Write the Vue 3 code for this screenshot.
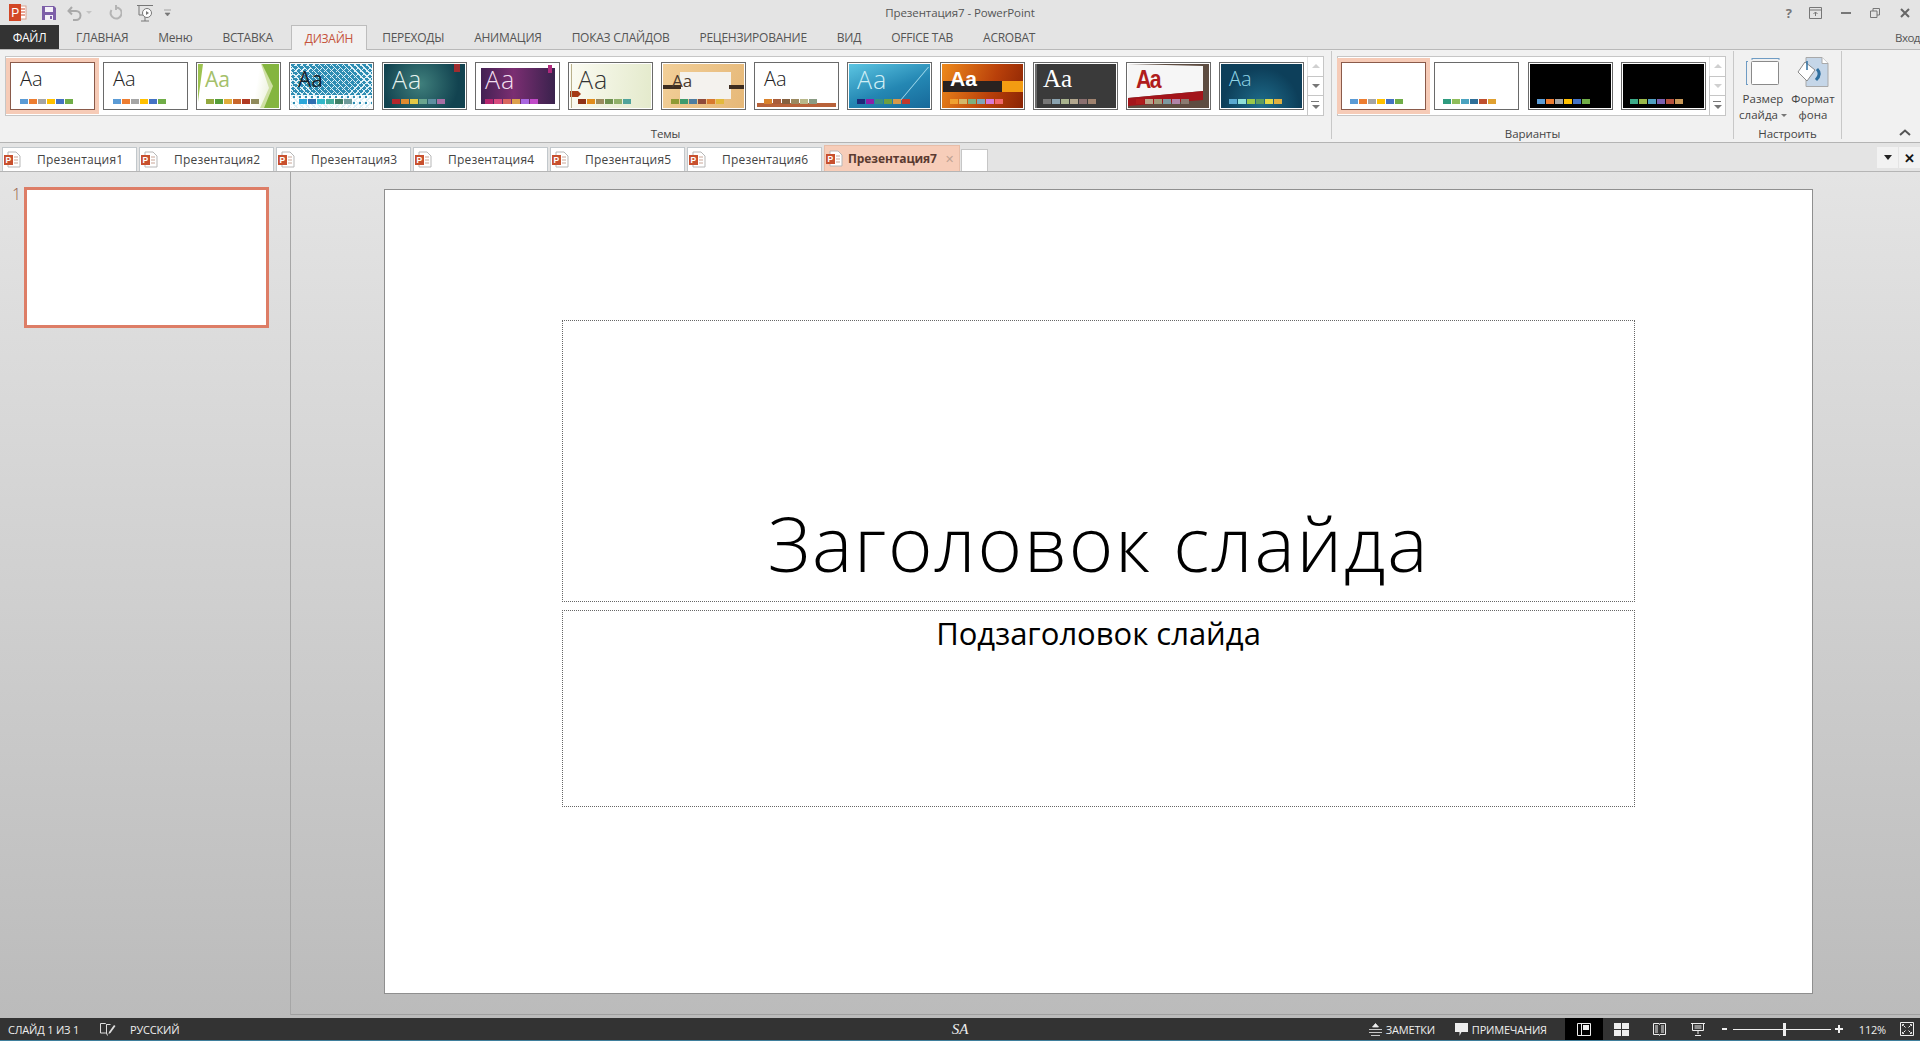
<template>
  <div class="app">
    <!-- заголовок окна -->
    <div class="titlebar">
      <div class="qat">
        <svg class="ic" width="18" height="17" viewBox="0 0 18 17" style="margin-left:9px">
          <rect x="6" y="2" width="11" height="13" fill="#fff" stroke="#d9a08c" />
          <path d="M11 5h5M11 8h5M11 11h5" stroke="#d24726" />
          <rect x="0" y="0" width="12" height="17" fill="#d24726" />
          <text x="2.2" y="13" font-size="12" fill="#fff" font-family="Liberation Sans">P</text>
        </svg>
        <svg class="ic" width="16" height="16" viewBox="0 0 16 16" style="margin-left:14px">
          <path d="M1 1h12l2 2v12H1z" fill="#7d5fa8" />
          <rect x="4" y="2" width="8" height="5" fill="#f4f1f8" />
          <rect x="4" y="10" width="8" height="5" fill="#f4f1f8" />
          <rect x="9" y="11" width="2" height="3" fill="#7d5fa8" />
        </svg>
        <svg class="ic" width="16" height="16" viewBox="0 0 16 16" style="margin-left:10px">
          <path d="M5 2 1.500 6 5 9.500M2 6h7a4.500 4.500 0 0 1 0 9H6" fill="none" stroke="#a9a9a9" stroke-width="2" />
        </svg>
        <span class="mini-arrow"></span>
        <svg class="ic" width="14" height="16" viewBox="0 0 14 16" style="margin-left:16px">
          <path d="M8 2.500A5.500 5.500 0 1 1 3.500 5M8 0v5" fill="none" stroke="#b4b4b4" stroke-width="2" />
        </svg>
        <svg class="ic" width="18" height="18" viewBox="0 0 18 18" style="margin-left:14px">
          <path d="M1 1.500h16M3 2v9h5M9 13v4M5 17h8" fill="none" stroke="#777" />
          <circle cx="11" cy="9" r="4.500" fill="#fff" stroke="#777" />
          <path d="M10 7v4l3-2z" fill="#777" />
        </svg>
        <svg class="ic" width="7" height="8" viewBox="0 0 7 8" style="margin-left:10px">
          <path d="M0 1h7M1 4h5l-2.500 3z" fill="#777" stroke="#777" stroke-width=".6" />
        </svg>
      </div>
      <div class="doc-title">Презентация7 - PowerPoint</div>
      <div class="winctl">
        <span class="help">?</span>
        <svg width="13" height="12" viewBox="0 0 13 12"><path d="M.5.500h12v11H.5zM.5 3h12M6.500 9V5M4.500 7l2-2 2 2" fill="none" stroke="#777" /></svg>
        <svg width="10" height="3" viewBox="0 0 10 3" style="margin-left:19px"><rect width="10" height="2" y="1" fill="#777" /></svg>
        <svg width="10" height="10" viewBox="0 0 10 10" style="margin-left:19px"><path d="M.5 3h6.500v6.500H.5zM3 3V.5h6.500V7H7" fill="none" stroke="#777" /></svg>
        <svg width="10" height="10" viewBox="0 0 10 10" style="margin-left:20px"><path d="M1 1l8 8M9 1 1 9" stroke="#666" stroke-width="2" /></svg>
      </div>
    </div>

    <!-- вкладки ленты -->
    <div class="tabs">
      <div class="tab-file">ФАЙЛ</div>
      <div v-for="t in ribbonTabs" :key="t" class="tab" :class="{ active: t === 'ДИЗАЙН' }">{{ t }}</div>
      <div class="login">Вход</div>
    </div>

    <!-- лента -->
    <div class="ribbon">
      <div class="group group-themes">
        <div class="gallery">
          <div class="thumbs">
            <div
              v-for="(th, i) in themes"
              :key="i"
              class="thumb"
              :class="{ selected: i === 0 }"
            >
              <div class="thumb-in" :style="{ background: th.bg }">
                <svg v-if="th.shapes" class="deco" viewBox="0 0 81 44" width="81" height="44">
                  <polygon v-for="(s, k) in th.shapes" :key="k" :points="s[0]" :fill="s[1]" />
                </svg>
                <span class="aa" :class="th.font" :style="{ color: th.color }">Aa</span>
                <div class="swatches">
                  <i v-for="c in th.sw" :key="c" :style="{ background: c }"></i>
                </div>
              </div>
            </div>
          </div>
          <div class="scroller">
            <span class="sc up"></span>
            <span class="sc down"></span>
            <span class="sc more"></span>
          </div>
        </div>
        <div class="group-label">Темы</div>
      </div>

      <div class="group group-variants">
        <div class="gallery">
          <div class="thumbs">
            <div
              v-for="(th, i) in variants"
              :key="i"
              class="thumb"
              :class="{ selected: i === 0 }"
            >
              <div class="thumb-in" :style="{ background: th.bg }">
                <div class="swatches low">
                  <i v-for="c in th.sw" :key="c" :style="{ background: c }"></i>
                </div>
              </div>
            </div>
          </div>
          <div class="scroller">
            <span class="sc up"></span>
            <span class="sc down faded"></span>
            <span class="sc more"></span>
          </div>
        </div>
        <div class="group-label">Варианты</div>
      </div>

      <div class="group group-setup">
        <div class="big-btns">
          <div class="big-btn">
            <svg width="34" height="28" viewBox="0 0 34 28">
              <rect x="5.500" y="3.500" width="27" height="23" rx="1" fill="#fff" stroke="#8a8a8a" />
              <path d="M6 .5h27M6 0v2M33 0v2M.5 4v22M0 3.500h2M0 26.500h2" fill="none" stroke="#6f9cc4" />
            </svg>
            <div class="big-txt">Размер<br />слайда<span class="caret"></span></div>
          </div>
          <div class="big-btn">
            <svg width="32" height="30" viewBox="0 0 32 30">
              <path d="M9 .5h16l6 6v23H9z" fill="#c5d6e8" stroke="#a9a9a9" />
              <path d="M25 .5v6h6" fill="#fff" stroke="#a9a9a9" />
              <path d="M8 5 1 15l9 9 8-11z" fill="#fff" stroke="#8a8a8a" />
              <path d="M10 4v9" stroke="#2f6f9f" stroke-width="1.500" />
              <path d="M20 12c3 3 3 7-1 11" fill="none" stroke="#2f6f9f" stroke-width="3" />
            </svg>
            <div class="big-txt">Формат<br />фона</div>
          </div>
        </div>
        <div class="group-label">Настроить</div>
      </div>

      <svg class="collapse" width="12" height="7" viewBox="0 0 12 7">
        <path d="M1 6l5-4.500L11 6" fill="none" stroke="#555" stroke-width="2" />
      </svg>
    </div>

    <!-- вкладки Office Tab -->
    <div class="docbar">
      <div
        v-for="(d, i) in docs"
        :key="d"
        class="doc"
        :class="{ current: i === docs.length - 1 }"
      >
        <svg width="17" height="17" viewBox="0 0 17 17">
          <path d="M4 1h8l4 4v11H4z" fill="#fff" stroke="#b7b7b7" />
          <path d="M10 6h4M10 9h4M10 12h4" stroke="#c9a596" />
          <rect x="0" y="4" width="9" height="10" fill="#c8502e" />
          <text x="1.500" y="12" font-size="8.500" font-weight="700" fill="#fff" font-family="Liberation Sans">P</text>
        </svg>
        <span class="doc-name">{{ d }}</span>
        <span v-if="i === docs.length - 1" class="doc-x">✕</span>
      </div>
      <div class="doc-new"></div>
      <div class="bar-btns">
        <span class="bar-btn"><i class="tri"></i></span>
        <span class="bar-btn x">✕</span>
      </div>
    </div>

    <!-- рабочая область -->
    <div class="work">
      <div class="side">
        <span class="num">1</span>
        <div class="side-slide"></div>
      </div>
      <div class="editor">
        <div class="slide">
          <div class="ph ph-title"><span>Заголовок слайда</span></div>
          <div class="ph ph-sub"><span>Подзаголовок слайда</span></div>
        </div>
      </div>
    </div>

    <!-- строка состояния -->
    <div class="status">
      <div class="st-left">
        <span>СЛАЙД 1 ИЗ 1</span>
        <svg width="16" height="14" viewBox="0 0 16 14" class="st-notes">
          <path d="M.5 1.500h5l1 1v9l-1-.5h-5zM6.500 2.500h4M6.500 11l1 2.500" fill="none" stroke="#ddd" />
          <path d="M9 10l5-7 1.500 1-5 7-2 1z" fill="#ddd" />
        </svg>
        <span>РУССКИЙ</span>
      </div>
      <div class="sa">SA</div>
      <div class="st-right">
        <svg width="13" height="13" viewBox="0 0 13 13">
          <path d="M3.500 4l3-3.500 3 3.500zM0 6.500h13M0 9.500h13M2 12.500h9" fill="#eee" stroke="#eee" stroke-width=".8" />
        </svg>
        <span class="st-txt w1">ЗАМЕТКИ</span>
        <svg width="13" height="13" viewBox="0 0 13 13">
          <path d="M0 0h13v9H6.500l-2 4V9H0z" fill="#eee" />
        </svg>
        <span class="st-txt w2">ПРИМЕЧАНИЯ</span>
        <div class="view on">
          <svg width="14" height="13" viewBox="0 0 14 13"><path d="M.5.500h13v12H.5zM4.500 1v11" fill="none" stroke="#eee" /><rect x="6" y="2" width="6" height="5" fill="#eee" /></svg>
        </div>
        <div class="view">
          <svg width="15" height="13" viewBox="0 0 15 13"><rect width="7" height="6" fill="#eee" /><rect x="8" width="7" height="6" fill="#eee" /><rect y="7" width="7" height="6" fill="#eee" /><rect x="8" y="7" width="7" height="6" fill="#eee" /></svg>
        </div>
        <div class="view">
          <svg width="13" height="13" viewBox="0 0 13 13"><path d="M.5.500h5.500l.5 1 .5-1h5.500v11h-5.500l-.5 1-.5-1H.5zM2 3h3M2 5h3M2 7h3M2 9h3M8 3h3M8 5h3M8 7h3M8 9h3" fill="none" stroke="#eee" /></svg>
        </div>
        <div class="view">
          <svg width="14" height="13" viewBox="0 0 14 13"><path d="M0 .5h14M1.500 1v6.500h11V1M7 8v3M4 12.500h6M3.500 3h7M3.500 5h7" fill="none" stroke="#eee" /></svg>
        </div>
        <div class="zoomer">
          <span class="z-minus"></span>
          <span class="z-line"><i></i></span>
          <span class="z-plus"></span>
        </div>
        <span class="pct">112%</span>
        <svg width="14" height="14" viewBox="0 0 14 14">
          <path d="M.5.500h13v13H.5zM2.500 4V2.500H4M10 2.500h1.500V4M2.500 10v1.500H4M10 11.500h1.500V10M5.500 5.500l-2-2M8.500 5.500l2-2M5.500 8.500l-2 2M8.500 8.500l2 2" fill="none" stroke="#eee" />
        </svg>
      </div>
    </div>
  </div>
</template>

<script setup>
const ribbonTabs = [
  'ГЛАВНАЯ', 'Меню', 'ВСТАВКА', 'ДИЗАЙН', 'ПЕРЕХОДЫ', 'АНИМАЦИЯ',
  'ПОКАЗ СЛАЙДОВ', 'РЕЦЕНЗИРОВАНИЕ', 'ВИД', 'OFFICE TAB', 'ACROBAT'
]

const docs = [1, 2, 3, 4, 5, 6, 7].map(n => 'Презентация' + n)

const office = ['#5b9bd5', '#ed7d31', '#a5a5a5', '#ffc000', '#4472c4', '#70ad47']

// темы галереи: фон, цвет Aa, образцы цветов и декоративные фигуры
const themes = [
  { bg: '#fff', color: '#222', font: 'light', sw: office },
  { bg: '#fff', color: '#222', font: 'light', sw: office },
  {
    bg: 'linear-gradient(100deg,#fff 70%,#eef3df 85%)', color: '#a4c06a', font: 'regular',
    sw: ['#93a83f', '#549e39', '#e0ac3a', '#c8662b', '#b03a23', '#8f8a5b'],
    shapes: [
      ['0,0 5,0 1,30 0,38', '#9cc24f'],
      ['63,0 81,0 81,44 62,44 71,24', '#cfe0a4'],
      ['64,0 81,0 81,44 66,44 75,22', '#84b53f']
    ]
  },
  {
    bg: 'radial-gradient(circle at 3px 3px,#2e8db3 1.200px,transparent 1.400px) 0 0/6px 6px,repeating-linear-gradient(45deg,#dff1f7 0 1px,transparent 1px 4.200px),repeating-linear-gradient(-45deg,#dff1f7 0 1px,transparent 1px 4.200px),linear-gradient(#2e8db3,#2e8db3) 0 0/100% 31px no-repeat,#fff',
    color: '#16242e', font: 'regular',
    sw: ['#2aa6d9', '#2f6fb0', '#31b7c9', '#43ab9b', '#3f7f66', '#6d9a9a']
  },
  {
    bg: 'radial-gradient(circle at 45% 45%,#3f7f7c,#124350 75%)', color: '#e6f3f0', font: 'thin',
    sw: ['#b3262c', '#e08a2e', '#e3c845', '#6aa58e', '#5d8fa0', '#a86ea3'],
    shapes: [['70,0 76,0 76,8 70,8', '#a02c2f']]
  },
  {
    bg: 'linear-gradient(90deg,#3c1f4f,#7b2e72 45%,#35214a)',
    color: '#f2dff0', font: 'thin',
    sw: ['#b6256e', '#d84a7e', '#d9665e', '#dca04c', '#a966e0', '#c14ac9'],
    shapes: [
      ['0,0 81,0 81,4 0,4', '#fff'],
      ['0,0 4,0 4,44 0,44', '#fff'],
      ['78,0 81,0 81,44 78,44', '#fff'],
      ['0,40 81,40 81,44 0,44', '#fff'],
      ['71,1 75,1 75,9 71,9', '#b02a7c']
    ]
  },
  {
    bg: 'linear-gradient(95deg,#fbfbf2,#e4eacc)', color: '#333', font: 'thin',
    sw: ['#8e3216', '#e08c1c', '#9a8a5e', '#6e9150', '#8fb06a', '#4fa39b'],
    shapes: [['0,27 8,27 11,30 8,33 0,33', '#a53a14'], ['1,0 2,0 2,44 1,44', '#b9b08c']]
  },
  {
    bg: 'linear-gradient(110deg,#f2cf98,#e6b878)', color: '#4b3b30', font: 'small',
    sw: ['#8f9a35', '#3e9a6d', '#4d7da0', '#8f4a3a', '#d9792e', '#e3b93c'],
    shapes: [['17,8 68,8 68,35 17,35', '#f4f2ee'], ['0,21 18,21 18,25 0,25', '#3e2d20'], ['66,21 81,21 81,25 66,25', '#3e2d20']]
  },
  {
    bg: '#fff', color: '#222', font: 'light',
    sw: ['#d9822b', '#a85c3a', '#84603f', '#9b8960', '#b8b88a', '#8a9c84'],
    shapes: [['1,39 80,39 80,43 1,43', '#b8623a']]
  },
  {
    bg: 'linear-gradient(160deg,#5cc5e2,#2487b3 55%,#17699a)', color: '#cfeef5', font: 'thin',
    sw: ['#1b2a78', '#8b1fa5', '#3a8f80', '#6f9f3f', '#d6984a', '#c0392b'],
    shapes: [['48,40 79,3 80,3 49,40', '#a9dff0']]
  },
  {
    bg: 'linear-gradient(110deg,#ee8a1c,#b9400a 60%,#8a2404)', color: '#fff', font: 'bold',
    sw: ['#f0a030', '#d4b86a', '#7eb07e', '#7fa6b8', '#d77bd7', '#f0686a'],
    shapes: [['1,17 60,17 60,28 1,28', '#2a2220'], ['60,17 81,17 81,28 60,28', '#f39c12']]
  },
  {
    bg: '#3a3a3a', color: '#fff', font: 'serif',
    sw: ['#777', '#8aa3b0', '#a9b38e', '#b3a78e', '#8a6f6f', '#a0836f'],
    shapes: [['0,0 2,0 2,44 0,44', '#6b6b6b']]
  },
  {
    bg: '#5d4c41', color: '#b01c1c', font: 'heavy',
    sw: ['#b01c1c', '#b8a48a', '#a09a7a', '#7d98a0', '#b083a8', '#8a7a70'],
    shapes: [['0,0 75,2 75,27 0,34', '#f6f6f6'], ['0,34 75,27 75,36 0,42', '#a3141a']]
  },
  {
    bg: 'radial-gradient(circle at 50% 95%,#1f6d8c,#0d3f5a 65%)', color: '#8fd4e6', font: 'light',
    sw: ['#5aa9d0', '#8fe0d8', '#9ac84a', '#5d9d5d', '#e0d84a', '#e0b040']
  }
]

const variants = [
  { bg: '#fff', sw: office },
  { bg: '#fff', sw: ['#2e9b7f', '#8fbd5a', '#4aa3c0', '#2f6f98', '#bf4f2e', '#e0a030'] },
  { bg: '#000', sw: office },
  { bg: '#000', sw: ['#3caa88', '#9ab84a', '#4f9fc0', '#7a60b0', '#b5503e', '#c89858'] }
]
</script>

<style>
html, body {
  margin: 0;
  overflow: hidden;
}
</style>

<style scoped>
.app {
  width: 1920px;
  height: 1041px;
  display: flex;
  flex-direction: column;
  overflow: hidden;
  font-family: "Open Sans", "Noto Sans", sans-serif;
  font-size: 12px;
  color: #444;
  background: #e4e4e4;
}

.titlebar {
  height: 25px;
  display: grid;
  grid-template-columns: 1fr auto 1fr;
  align-items: center;
}

.qat {
  display: flex;
  align-items: center;
}

.mini-arrow {
  margin-left: 3px;
  border: 3px solid transparent;
  border-top: 3px solid #c4c4c4;
  margin-top: 3px;
}

.doc-title {
  font-size: 11.5px;
  color: #555;
  letter-spacing: -0.1px;
}

.winctl {
  display: flex;
  align-items: center;
  justify-content: flex-end;
  padding-right: 10px;
}

.help {
  font-weight: 700;
  font-size: 13px;
  color: #777;
  margin-right: 17px;
}

.tabs {
  height: 24px;
  display: flex;
  align-items: stretch;
  border-bottom: 1px solid #b9b9b9;
  letter-spacing: -0.25px;
}

.tab-file {
  width: 59px;
  background: #333;
  color: #fff;
  display: flex;
  align-items: center;
  justify-content: center;
  margin-right: 2px;
}

.tab {
  padding: 0 15px;
  display: flex;
  align-items: center;
  color: #555;
  white-space: nowrap;
}

.tab.active {
  color: #c5533a;
  background: #f1f1f1;
  border: 1px solid #bdbdbd;
  border-bottom: none;
  height: 25px;
  padding: 0 13px;
  box-sizing: border-box;
  margin-left: 3px;
}

.login {
  margin-left: auto;
  align-self: center;
  width: 25px;
  white-space: nowrap;
  color: #555;
  font-size: 11.5px;
  letter-spacing: -0.5px;
}

.ribbon {
  height: 92px;
  background: #f1f1f1;
  display: flex;
  border-bottom: 1px solid #b4b4b4;
  position: relative;
}

.group {
  box-sizing: border-box;
  height: 88px;
  margin-top: 1px;
  padding-top: 5px;
  border-right: 1px solid #c8c8c8;
  display: flex;
  flex-direction: column;
  align-items: flex-start;
}

.group-themes {
  width: 1332px;
  padding-left: 5px;
}

.group-variants {
  width: 402px;
  padding-left: 5px;
}

.group-setup {
  width: 108px;
  padding-left: 4px;
}

.group-label {
  align-self: stretch;
  text-align: center;
  margin: auto 0 -4px -5px;
  font-size: 11.5px;
  line-height: 16px;
  padding-bottom: 1px;
  color: #444;
  letter-spacing: -0.1px;
}

.group-setup .group-label {
  margin-left: -4px;
}

.gallery {
  height: 60px;
  box-sizing: border-box;
  background: #fff;
  border: 1px solid #c6c6c6;
  display: flex;
  justify-content: space-between;
  align-self: stretch;
  margin-right: 7px;
}

.thumbs {
  display: flex;
  gap: 8px;
  padding: 5px 0 0 4px;
}

.group-variants .thumbs {
  gap: 8.300px;
  padding-left: 3px;
}

.thumb {
  width: 85px;
  height: 48px;
  box-sizing: border-box;
  border: 1px solid #6a6a6a;
  padding: 1px;
  background: #fff;
}

.thumb.selected {
  box-shadow: 0 0 0 4px #f6cbb7;
  border-color: #8a5a4a;
}

.thumb-in {
  width: 81px;
  height: 44px;
  position: relative;
  overflow: hidden;
  display: flex;
  flex-direction: column;
}

.deco {
  position: absolute;
  left: 0;
  top: 0;
}

.aa {
  position: relative;
  font-size: 20px;
  line-height: 30px;
  margin-left: 8px;
  font-weight: 300;
}

.aa.regular {
  font-size: 21px;
  font-weight: 400;
  margin-left: 7px;
}

.aa.thin {
  font-size: 25px;
  letter-spacing: 1px;
}

.aa.small {
  font-size: 17px;
  margin: 2px 0 0 9px;
  font-weight: 400;
}

.aa.bold {
  font-family: "Liberation Sans", sans-serif;
  font-size: 21px;
  font-weight: 700;
}

.aa.serif {
  font-family: "Liberation Serif", serif;
  font-size: 25px;
}

.aa.heavy {
  font-family: "Liberation Sans", sans-serif;
  font-size: 25px;
  font-weight: 700;
  letter-spacing: -2px;
  transform: scaleX(.85);
  transform-origin: 0 50%;
}

.swatches {
  position: absolute;
  left: 8px;
  top: 35px;
  display: flex;
  gap: 1px;
}

.swatches.low {
  left: 7px;
}

.swatches i {
  display: block;
  width: 8px;
  height: 5px;
}

.scroller {
  width: 15px;
  display: flex;
  flex-direction: column;
  border-left: 1px solid #e4e4e4;
}

.sc {
  flex: 1;
  display: flex;
  align-items: center;
  justify-content: center;
  position: relative;
}

.sc + .sc {
  border-top: 1px solid #c6c6c6;
}

.sc.down,
.sc.more {
  border-left: 1px solid #c6c6c6;
  margin-left: -1px;
}

.sc::after {
  content: "";
  border: 4px solid transparent;
}

.sc.up::after {
  border-bottom: 4px solid #d0d0d0;
  margin-top: -4px;
}

.sc.down::after {
  border-top: 4px solid #777;
  margin-top: 4px;
}

.sc.down.faded::after {
  border-top-color: #d0d0d0;
}

.sc.more::after {
  border-top: 4px solid #777;
  margin-top: 6px;
}

.sc.more::before {
  content: "";
  position: absolute;
  left: 3px;
  width: 8px;
  top: 5px;
  height: 1px;
  background: #777;
}

.big-btns {
  display: flex;
}

.big-btn {
  width: 50px;
  display: flex;
  flex-direction: column;
  align-items: center;
  margin-top: 1px;
}

.big-btn svg {
  height: 30px;
}

.big-txt {
  text-align: center;
  font-size: 11.5px;
  line-height: 16px;
  margin-top: 4px;
  color: #444;
  white-space: nowrap;
}

.caret {
  display: inline-block;
  margin-left: 3px;
  border: 3px solid transparent;
  border-top: 3px solid #777;
  vertical-align: -1px;
}

.collapse {
  position: absolute;
  right: 9px;
  bottom: 6px;
}

.docbar {
  height: 29px;
  box-sizing: border-box;
  display: flex;
  align-items: flex-end;
  padding-left: 2px;
  border-bottom: 1px solid #b5b5b5;
}

.doc {
  width: 135px;
  height: 24px;
  box-sizing: border-box;
  margin-right: 2px;
  background: #fff;
  border: 1px solid #c2c8cc;
  border-bottom: none;
  display: flex;
  align-items: center;
  padding-left: 1px;
  flex: none;
}

.doc-name {
  margin-left: 16px;
  font-size: 12px;
  letter-spacing: 0.2px;
  color: #444;
}

.doc.current {
  width: 136px;
  height: 26px;
  margin-right: 1px;
  background: #f7cdb9;
  border-color: #e8bda8;
}

.doc.current svg {
  flex: none;
}

.doc.current .doc-name {
  margin-left: 5px;
  font-weight: 700;
  letter-spacing: -0.1px;
  color: #5a3a30;
}

.doc-x {
  margin-left: 8px;
  font-size: 11px;
  color: #bfa394;
}

.doc-new {
  width: 27px;
  height: 22px;
  box-sizing: border-box;
  background: #fff;
  border: 1px solid #c6c6c6;
  border-bottom: none;
}

.bar-btns {
  margin-left: auto;
  align-self: flex-start;
  display: flex;
  gap: 1px;
  margin-top: 4px;
}

.bar-btn {
  width: 21px;
  height: 21px;
  background: #f2f2f2;
  display: flex;
  align-items: center;
  justify-content: center;
  color: #111;
  font-weight: 700;
  font-size: 13px;
}

.tri {
  border: 4px solid transparent;
  border-top: 5px solid #222;
  margin-top: 4px;
}

.work {
  height: 846px;
  flex: none;
  display: flex;
  background: linear-gradient(#e4e4e4, #bbb);
}

.side {
  width: 291px;
  flex: none;
  box-sizing: border-box;
  border-right: 1px solid #a6a6a6;
  display: flex;
  padding: 15px 0 0 12px;
  align-items: flex-start;
  height: 843px;
}

.num {
  width: 12px;
  font-size: 16px;
  line-height: 15px;
  font-weight: 300;
  color: #96604c;
}

.side-slide {
  width: 245px;
  height: 141px;
  box-sizing: border-box;
  background: #fff;
  border: 3px solid #dd7d66;
}

.editor {
  flex: 1;
  height: 843px;
  box-sizing: border-box;
  padding: 17px 0 0 93px;
  border-bottom: 1px solid #a0a0a0;
}

.slide {
  width: 1429px;
  height: 805px;
  box-sizing: border-box;
  background: #fff;
  border: 1px solid #8f8f8f;
  padding: 130px 0 0 177px;
  color: #000;
}

.ph {
  width: 1073px;
  box-sizing: border-box;
  border: 1px dotted #666;
  display: flex;
  justify-content: center;
}

.ph-title {
  height: 282px;
  align-items: flex-end;
  font-size: 76px;
  letter-spacing: 1.800px;
  font-weight: 300;
  line-height: 100px;
  padding-bottom: 8px;
}

.ph-sub {
  height: 197px;
  margin-top: 8px;
  font-size: 31px;
  line-height: 44px;
}

.status {
  height: 22px;
  flex: none;
  background: #333;
  border-bottom: 1px solid #3f7f9c;
  color: #eee;
  font-size: 11px;
  display: grid;
  grid-template-columns: 1fr auto 1fr;
  align-items: center;
  letter-spacing: -0.2px;
}

.st-left {
  display: flex;
  align-items: center;
  padding-left: 8px;
}

.st-notes {
  margin: 0 14px 0 21px;
}

.sa {
  font-family: "Liberation Serif", serif;
  font-style: italic;
  font-size: 15px;
  letter-spacing: 0;
}

.st-right {
  display: flex;
  align-items: center;
  justify-content: flex-end;
  height: 22px;
  padding-right: 6px;
}

.st-txt {
  margin-left: 4px;
  white-space: nowrap;
}

.st-txt.w1 {
  width: 69px;
}

.st-txt.w2 {
  width: 93px;
}

.view {
  width: 38px;
  height: 22px;
  display: flex;
  align-items: center;
  justify-content: center;
}

.view.on {
  background: #000;
}

.zoomer {
  display: flex;
  align-items: center;
  margin-left: 3px;
  width: 123px;
}

.z-minus {
  width: 5px;
  height: 2px;
  background: #eee;
  margin: 0 6px 0 2px;
}

.z-line {
  width: 100px;
  height: 1px;
  background: #eee;
  position: relative;
}

.z-line i {
  position: absolute;
  left: 50px;
  top: -6px;
  width: 3px;
  height: 13px;
  background: #eee;
}

.z-plus {
  width: 8px;
  height: 2px;
  background: #eee;
  margin-left: 4px;
  position: relative;
}

.z-plus::after {
  content: "";
  position: absolute;
  left: 3px;
  top: -3px;
  width: 2px;
  height: 8px;
  background: #eee;
}

.pct {
  margin: 0 14px 0 16px;
}
</style>
